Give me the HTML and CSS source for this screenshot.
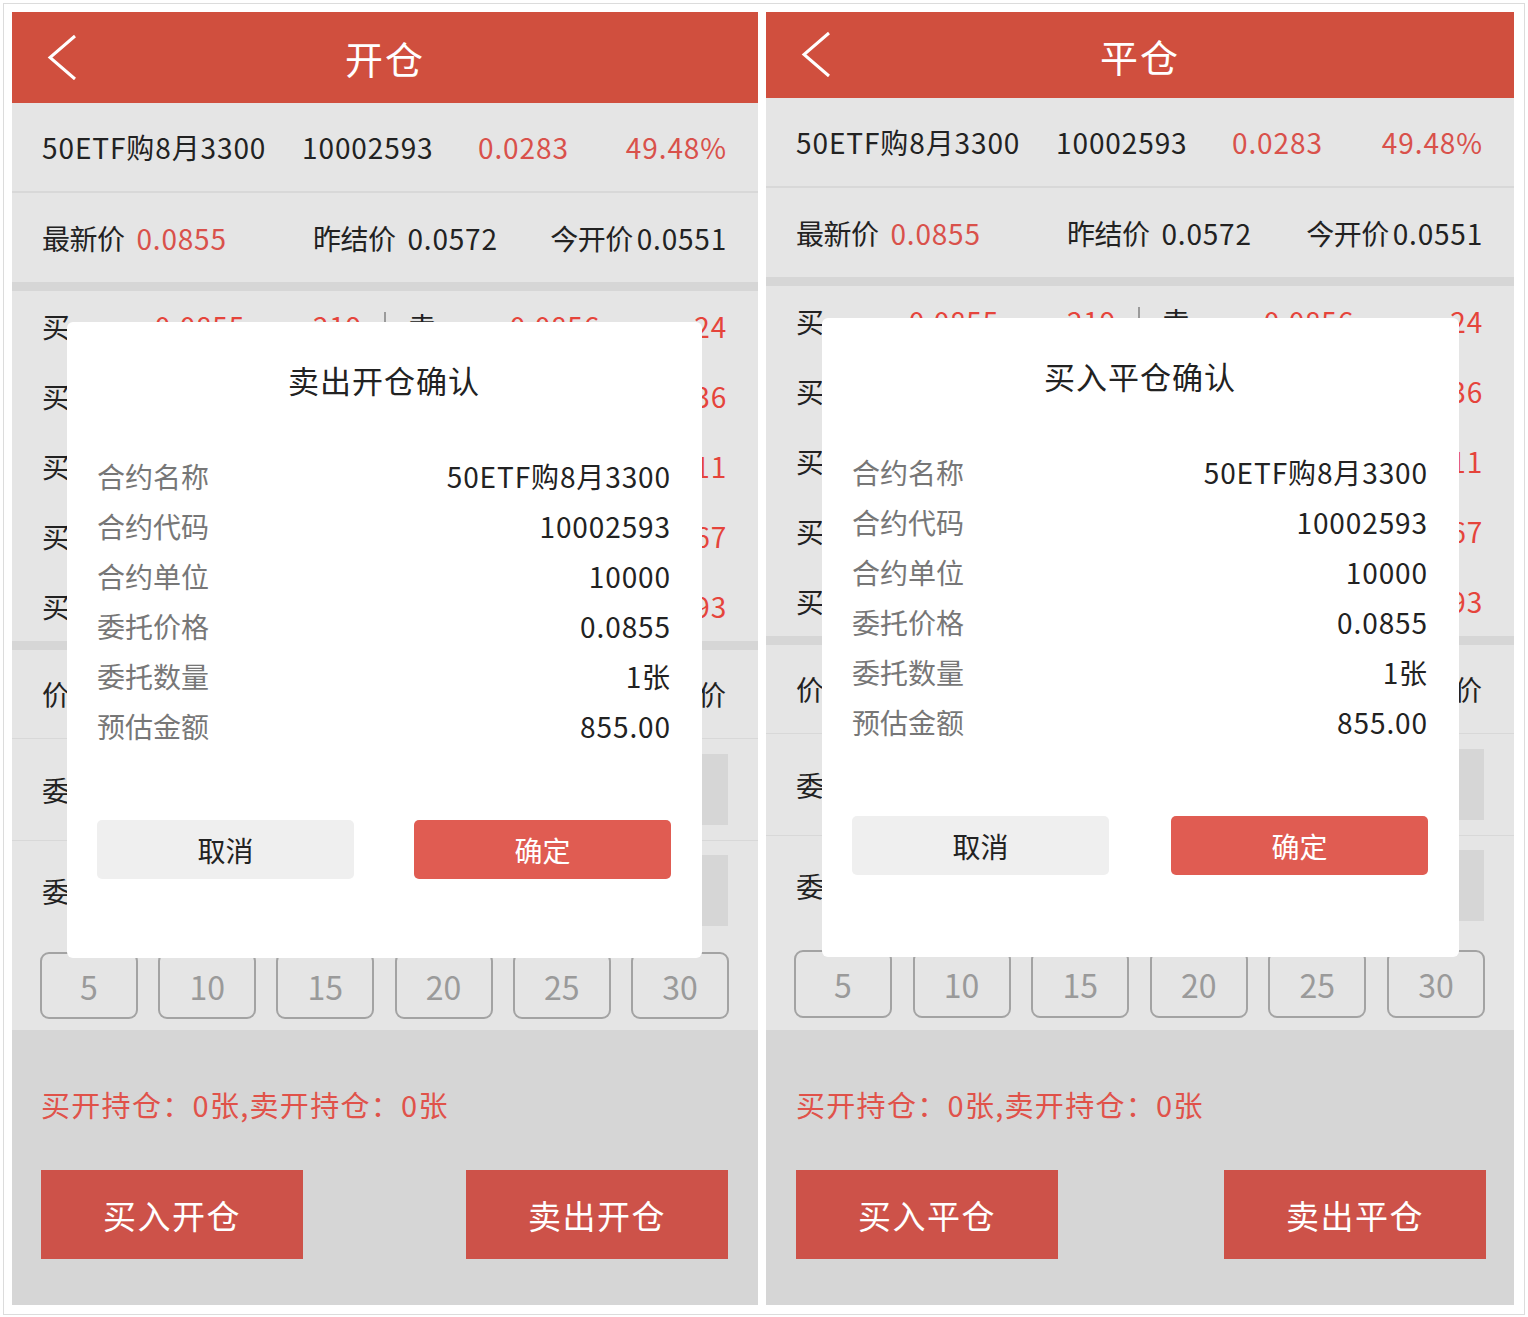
FILE: index.html
```html
<!DOCTYPE html>
<html lang="zh-CN">
<head>
<meta charset="utf-8">
<title>开仓 / 平仓</title>
<link rel="stylesheet" href="styles.css">
</head>
<body>
<div class="frame">
  <section class="phone phone-open">
    <header class="nav">
      <span class="back"><svg width="30" height="48" viewBox="0 0 30 48"><polyline points="28,2 3,23.5 28,45" fill="none" stroke="#fff" stroke-width="3"/></svg></span>
      <h1 class="nav-title">开仓</h1>
      <span></span>
    </header>
    <div class="quote quote-1">
      <span>50ETF购8月3300</span><span>10002593</span><span class="red">0.0283</span><span class="red">49.48%</span>
    </div>
    <div class="quote quote-2">
      <span>最新价<em class="red">0.0855</em></span><span>昨结价<em>0.0572</em></span><span>今开价<em class="tight">0.0551</em></span>
    </div>
    <div class="sep"></div>
    <div class="book">
      <div class="book-row"><span>买一</span><span class="red r">0.0855</span><span class="red r">219</span><span class="div"></span><span>卖一</span><span class="red r">0.0856</span><span class="red r">24</span></div>
      <div class="book-row"><span>买二</span><span class="red r">0.0854</span><span class="red r">52</span><span class="div"></span><span>卖二</span><span class="red r">0.0857</span><span class="red r">36</span></div>
      <div class="book-row"><span>买三</span><span class="red r">0.0853</span><span class="red r">30</span><span class="div"></span><span>卖三</span><span class="red r">0.0858</span><span class="red r">11</span></div>
      <div class="book-row"><span>买四</span><span class="red r">0.0852</span><span class="red r">18</span><span class="div"></span><span>卖四</span><span class="red r">0.0859</span><span class="red r">67</span></div>
      <div class="book-row"><span>买五</span><span class="red r">0.0851</span><span class="red r">40</span><span class="div"></span><span>卖五</span><span class="red r">0.0860</span><span class="red r">93</span></div>
    </div>
    <div class="sep"></div>
    <div class="form-row price-row"><span>价格</span><span>对手价</span></div>
    <div class="form-row entrust-row e1"><span>委托价格</span><span class="input"></span></div>
    <div class="form-row entrust-row e2"><span>委托数量</span><span class="input"></span></div>
    <div class="quick">
      <span class="qbtn">5</span><span class="qbtn">10</span><span class="qbtn">15</span><span class="qbtn">20</span><span class="qbtn">25</span><span class="qbtn">30</span>
    </div>
    <div class="bottom">
      <p class="hold">买开持仓：0张,卖开持仓：0张</p>
      <div class="actions"><span class="act">买入开仓</span><span class="act">卖出开仓</span></div>
    </div>
    <div class="modal">
      <h2 class="modal-title">卖出开仓确认</h2>
      <dl class="modal-list">
        <div class="mrow"><dt>合约名称</dt><dd>50ETF购8月3300</dd></div>
        <div class="mrow"><dt>合约代码</dt><dd>10002593</dd></div>
        <div class="mrow"><dt>合约单位</dt><dd>10000</dd></div>
        <div class="mrow"><dt>委托价格</dt><dd>0.0855</dd></div>
        <div class="mrow"><dt>委托数量</dt><dd>1张</dd></div>
        <div class="mrow"><dt>预估金额</dt><dd>855.00</dd></div>
      </dl>
      <div class="modal-btns"><span class="mbtn cancel">取消</span><span class="mbtn ok">确定</span></div>
    </div>
  </section>

  <section class="phone phone-close">
    <header class="nav">
      <span class="back"><svg width="30" height="48" viewBox="0 0 30 48"><polyline points="28,2 3,23.5 28,45" fill="none" stroke="#fff" stroke-width="3"/></svg></span>
      <h1 class="nav-title">平仓</h1>
      <span></span>
    </header>
    <div class="quote quote-1">
      <span>50ETF购8月3300</span><span>10002593</span><span class="red">0.0283</span><span class="red">49.48%</span>
    </div>
    <div class="quote quote-2">
      <span>最新价<em class="red">0.0855</em></span><span>昨结价<em>0.0572</em></span><span>今开价<em class="tight">0.0551</em></span>
    </div>
    <div class="sep"></div>
    <div class="book">
      <div class="book-row"><span>买一</span><span class="red r">0.0855</span><span class="red r">219</span><span class="div"></span><span>卖一</span><span class="red r">0.0856</span><span class="red r">24</span></div>
      <div class="book-row"><span>买二</span><span class="red r">0.0854</span><span class="red r">52</span><span class="div"></span><span>卖二</span><span class="red r">0.0857</span><span class="red r">36</span></div>
      <div class="book-row"><span>买三</span><span class="red r">0.0853</span><span class="red r">30</span><span class="div"></span><span>卖三</span><span class="red r">0.0858</span><span class="red r">11</span></div>
      <div class="book-row"><span>买四</span><span class="red r">0.0852</span><span class="red r">18</span><span class="div"></span><span>卖四</span><span class="red r">0.0859</span><span class="red r">67</span></div>
      <div class="book-row"><span>买五</span><span class="red r">0.0851</span><span class="red r">40</span><span class="div"></span><span>卖五</span><span class="red r">0.0860</span><span class="red r">93</span></div>
    </div>
    <div class="sep"></div>
    <div class="form-row price-row"><span>价格</span><span>对手价</span></div>
    <div class="form-row entrust-row e1"><span>委托价格</span><span class="input"></span></div>
    <div class="form-row entrust-row e2"><span>委托数量</span><span class="input"></span></div>
    <div class="quick">
      <span class="qbtn">5</span><span class="qbtn">10</span><span class="qbtn">15</span><span class="qbtn">20</span><span class="qbtn">25</span><span class="qbtn">30</span>
    </div>
    <div class="bottom">
      <p class="hold">买开持仓：0张,卖开持仓：0张</p>
      <div class="actions"><span class="act">买入平仓</span><span class="act">卖出平仓</span></div>
    </div>
    <div class="modal">
      <h2 class="modal-title">买入平仓确认</h2>
      <dl class="modal-list">
        <div class="mrow"><dt>合约名称</dt><dd>50ETF购8月3300</dd></div>
        <div class="mrow"><dt>合约代码</dt><dd>10002593</dd></div>
        <div class="mrow"><dt>合约单位</dt><dd>10000</dd></div>
        <div class="mrow"><dt>委托价格</dt><dd>0.0855</dd></div>
        <div class="mrow"><dt>委托数量</dt><dd>1张</dd></div>
        <div class="mrow"><dt>预估金额</dt><dd>855.00</dd></div>
      </dl>
      <div class="modal-btns"><span class="mbtn cancel">取消</span><span class="mbtn ok">确定</span></div>
    </div>
  </section>
</div>
</body>
</html>
```

FILE: styles.css
```css
* { box-sizing: border-box; }
html, body { margin: 0; padding: 0; background: #fff; }
body {
  font-family: "Noto Sans CJK SC", "Noto Sans", sans-serif;
  color: #222;
}
.frame {
  margin: 3px;
  width: 1522px;
  height: 1312px;
  border: 1px solid #dcdcdc;
  padding: 8px;
  display: flex;
  gap: 8px;
  background: #fff;
}
.phone {
  position: relative;
  width: 746px;
  height: 1293px;
  display: flex;
  flex-direction: column;
  background: #e5e5e5;
  overflow: hidden;
}
.phone-close { width: 748px; }

.nav {
  height: 91px;
  flex: none;
  background: #d04f3e;
  display: grid;
  grid-template-columns: 1fr auto 1fr;
  align-items: center;
}
.phone-close .nav { height: 86px; }
.back { padding-left: 35px; display: flex; align-items: center; }
.back svg { display: block; }
.nav-title {
  margin: 0;
  font-size: 38px;
  font-weight: 400;
  color: #fff;
  letter-spacing: 2px;
}

.quote {
  flex: none;
  display: grid;
  align-items: center;
  padding: 0 31px 0 30px;
  font-size: 28px;
  letter-spacing: 0.9px;
  white-space: nowrap;
}
.quote-1 {
  height: 90px;
  grid-template-columns: 260px 176px 1fr auto;
  border-bottom: 2px solid #d8d8d8;
}
.quote-2 {
  height: 89px;
  grid-template-columns: 271px 1fr auto;
  letter-spacing: 0;
}
.quote-2 span { letter-spacing: -0.5px; }
.quote em { font-style: normal; margin-left: 12px; letter-spacing: 0.8px; }
.quote em.tight { margin-left: 4px; }
.red { color: #d9514b; }

.sep { flex: none; height: 9px; background: #d6d6d6; }

.book { flex: none; height: 350px; display: flex; flex-direction: column; }
.book-row {
  height: 70px;
  display: grid;
  grid-template-columns: 60px 143px 117px 46px 60px 132px 1fr;
  align-items: center;
  padding: 0 31px 0 30px;
  font-size: 28px;
  letter-spacing: 0.8px;
  white-space: nowrap;
}
.book-row .red { color: #e5443b; }
.book-row .r { text-align: right; }
.book-row .div { justify-self: center; width: 2px; height: 22px; background: #9a9a9a; align-self: start; margin-top: 21px; }

.form-row {
  flex: none;
  display: flex;
  align-items: center;
  justify-content: space-between;
  padding: 0 30px;
  font-size: 28px;
  border-bottom: 1px solid #d8d8d8;
}
.price-row { height: 89px; padding-right: 32px; }
.e1 { height: 102px; }
.e2 { height: 99px; border-bottom: none; }
.input { width: 560px; height: 71px; background: #d6d6d6; }

.quick {
  flex: none;
  height: 90px;
  padding: 12px 29px 11px 28px;
  display: flex;
  justify-content: space-between;
}
.phone-close .quick { height: 95px; padding-top: 15px; padding-bottom: 12px; }
.qbtn {
  width: 98px;
  border: 2px solid #a3a3a3;
  border-radius: 9px;
  display: flex;
  align-items: center;
  justify-content: center;
  font-size: 32px;
  color: #9a9a9a;
}

.bottom {
  flex: 1;
  background: #d6d6d6;
  padding: 54px 30px 0 29px;
}
.phone-close .bottom { padding-left: 30px; padding-right: 28px; }
.hold {
  margin: 0;
  height: 40px;
  line-height: 40px;
  font-size: 29px;
  letter-spacing: 1.3px;
  color: #e0524a;
  white-space: nowrap;
}
.actions {
  margin-top: 46px;
  display: flex;
  justify-content: space-between;
}
.act {
  width: 262px;
  height: 89px;
  background: #cd5249;
  color: #fff;
  font-size: 33px;
  letter-spacing: 1.5px;
  display: flex;
  align-items: center;
  justify-content: center;
}

.modal {
  position: absolute;
  left: 55px;
  top: 310px;
  width: 635px;
  height: 636px;
  background: #fff;
  border-radius: 6px;
  padding: 38px 31px 0 30px;
}
.phone-close .modal { left: 56px; top: 306px; width: 637px; height: 639px; }
.modal-title {
  margin: 0;
  height: 40px;
  line-height: 40px;
  text-align: center;
  font-size: 31px;
  font-weight: 400;
  color: #222;
  letter-spacing: 1px;
}
.modal-list { margin: 51px 0 0 0; }
.mrow {
  height: 50px;
  display: flex;
  align-items: center;
  justify-content: space-between;
  font-size: 28px;
}
.mrow dt { color: #777; }
.mrow dd { margin: 0; color: #222; letter-spacing: 0.9px; }
.modal-btns {
  margin-top: 69px;
  display: flex;
  justify-content: space-between;
}
.mbtn {
  width: 257px;
  height: 59px;
  border-radius: 5px;
  display: flex;
  align-items: center;
  justify-content: center;
  font-size: 28px;
}
.cancel { background: #efefef; color: #222; }
.ok { background: #e05c52; color: #fff; }
```
